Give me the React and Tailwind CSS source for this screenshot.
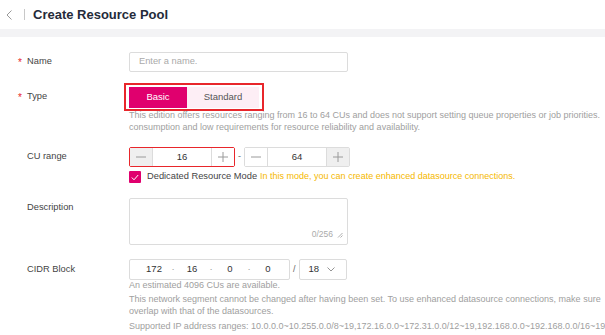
import React from 'react';

const MAGENTA = 'bg-[#e0006e]';

// Kotak merah anotasi di sekeliling kawalan
function Highlight({ children }) {
  return (
    <div className="relative">
      {children}
      <div className="pointer-events-none absolute -left-[5px] -right-[5px] -top-[4px] -bottom-[3px] border-2 border-[#e8262b]" />
    </div>
  );
}

function Minus() {
  return (
    <svg width="10" height="10" viewBox="0 0 10 10">
      <line x1="0" y1="5" x2="10" y2="5" stroke="#9a9a9a" strokeWidth="1" />
    </svg>
  );
}

function Plus() {
  return (
    <svg width="10" height="10" viewBox="0 0 10 10">
      <line x1="0" y1="5" x2="10" y2="5" stroke="#9a9a9a" strokeWidth="1" />
      <line x1="5" y1="0" x2="5" y2="10" stroke="#9a9a9a" strokeWidth="1" />
    </svg>
  );
}

function Stepper({ value, minDisabled, maxDisabled, red }) {
  return (
    <div
      className={`flex h-[20px] w-[106px] items-stretch rounded-[2px] border ${
        red ? 'border-[#e8262b] border-[1.5px]' : 'border-[#dcdcdc]'
      }`}
    >
      <div
        className={`flex w-[23px] items-center justify-center border-r border-[#dcdcdc] ${
          minDisabled ? 'bg-[#efefef]' : 'bg-white'
        }`}
      >
        <Minus />
      </div>
      <div className="flex flex-1 items-center justify-center text-[9.5px] text-[#333]">{value}</div>
      <div
        className={`flex w-[23px] items-center justify-center border-l border-[#dcdcdc] ${
          maxDisabled ? 'bg-[#efefef]' : 'bg-white'
        }`}
      >
        <Plus />
      </div>
    </div>
  );
}

function Label({ text, required }) {
  return (
    <div className="flex h-[20px] w-[129px] shrink-0 items-center pl-[18px] text-[9.3px] text-[#444]">
      <span className="w-[9px] text-[10px] text-[#e8262b]">{required ? '*' : ''}</span>
      {text}
    </div>
  );
}

export default function App() {
  return (
    <div className="h-[335px] w-[605px] overflow-hidden bg-white font-['Liberation_Sans',Arial,sans-serif]">
      {/* Header */}
      <div className="flex h-[29px] items-center pl-[6px]">
        <svg width="7" height="10" viewBox="0 0 7 10">
          <polyline points="5.5,0.5 1,5 5.5,9.5" fill="none" stroke="#999" strokeWidth="1" />
        </svg>
        <div className="ml-[11px] h-[11px] w-px bg-[#c8c8c8]" />
        <h1 className="ml-[8px] text-[13px] font-bold text-[#252b3a]">Create Resource Pool</h1>
      </div>
      <div className="h-[8px] bg-[#f3f3f5]" />

      {/* Name */}
      <div className="mt-[15px] flex items-center">
        <Label text="Name" required />
        <div className="flex h-[20px] w-[219px] items-center rounded-[2px] border border-[#dcdcdc] px-[9px] text-[9.3px] text-[#aaa]">
          Enter a name.
        </div>
      </div>

      {/* Type */}
      <div className="mt-[15px] flex items-start">
        <Label text="Type" required />
        <Highlight>
          <div className="flex h-[21px] text-[9.5px]">
            <div className={`flex w-[58px] items-center justify-center ${MAGENTA} text-white`}>Basic</div>
            <div className="flex w-[72px] items-center justify-center bg-[#fdeef5] text-[#555]">Standard</div>
          </div>
        </Highlight>
      </div>
      <div className="mt-px pl-[129px] text-[9px] leading-[12px] text-[#a0a0a0]">
        <div className="whitespace-nowrap">
          This edition offers resources ranging from 16 to 64 CUs and does not support setting queue properties or job priorities.
        </div>
        <div className="whitespace-nowrap">
          consumption and low requirements for resource reliability and availability.
        </div>
      </div>

      {/* CU range */}
      <div className="mt-[14px] flex items-center">
        <Label text="CU range" />
        <Stepper value="16" minDisabled red />
        <span className="mx-[3px] text-[9px] text-[#666]">-</span>
        <Stepper value="64" maxDisabled />
      </div>
      <div className="mt-[4px] flex h-[12px] items-center pl-[129px] text-[9px]">
        <div className={`flex h-[12px] w-[12px] items-center justify-center rounded-[1px] ${MAGENTA}`}>
          <svg width="8" height="7" viewBox="0 0 8 7">
            <polyline points="0.8,3.5 3,5.8 7.2,1" fill="none" stroke="#fff" strokeWidth="1" />
          </svg>
        </div>
        <span className="ml-[6px] text-[9.3px] text-[#444]">Dedicated Resource Mode</span>
        <span className="ml-[3px] text-[#f5b800]">In this mode, you can create enhanced datasource connections.</span>
      </div>

      {/* Description */}
      <div className="mt-[15px] flex items-start">
        <Label text="Description" />
        <div className="relative h-[47px] w-[219px] rounded-[2px] border border-[#dcdcdc]">
          <div className="absolute bottom-[3px] right-[4px] flex items-center gap-[4px] text-[8.5px] text-[#aaa]">
            <span>0/256</span>
            <svg width="6" height="6" viewBox="0 0 6 6">
              <line x1="1" y1="5.5" x2="5.5" y2="1" stroke="#999" strokeWidth="0.8" />
              <line x1="3.5" y1="5.5" x2="5.5" y2="3.5" stroke="#999" strokeWidth="0.8" />
            </svg>
          </div>
        </div>
      </div>

      {/* CIDR Block */}
      <div className="mt-[14px] flex items-center">
        <Label text="CIDR Block" />
        <div className="flex h-[21px] w-[161px] items-center rounded-[2px] border border-[#dcdcdc] pl-[9px] text-[9.5px] text-[#333]">
          <span className="w-[30px] text-center">172</span>
          <span className="w-[8px] text-center text-[#999]">·</span>
          <span className="w-[30px] text-center">16</span>
          <span className="w-[8px] text-center text-[#999]">·</span>
          <span className="w-[30px] text-center">0</span>
          <span className="w-[8px] text-center text-[#999]">·</span>
          <span className="w-[30px] text-center">0</span>
        </div>
        <span className="mx-[3px] text-[9px] text-[#666]">/</span>
        <div className="flex h-[21px] w-[48px] items-center rounded-[2px] border border-[#dcdcdc] pl-[9px] text-[9.5px] text-[#333]">
          <span>18</span>
          <svg className="ml-[8px]" width="8" height="5" viewBox="0 0 8 5">
            <polyline points="0.5,0.5 4,4 7.5,0.5" fill="none" stroke="#888" strokeWidth="0.9" />
          </svg>
        </div>
      </div>
      <div className="pl-[129px] text-[9px] text-[#a0a0a0]">
        <div className="whitespace-nowrap leading-[10px]">An estimated 4096 CUs are available.</div>
        <div className="mt-[3px] leading-[12px]">
          <div className="whitespace-nowrap">
            This network segment cannot be changed after having been set. To use enhanced datasource connections, make sure
          </div>
          <div className="whitespace-nowrap">overlap with that of the datasources.</div>
        </div>
        <div className="mt-[3px] whitespace-nowrap leading-[12px]">
          Supported IP address ranges: 10.0.0.0~10.255.0.0/8~19,172.16.0.0~172.31.0.0/12~19,192.168.0.0~192.168.0.0/16~19
        </div>
      </div>
    </div>
  );
}
